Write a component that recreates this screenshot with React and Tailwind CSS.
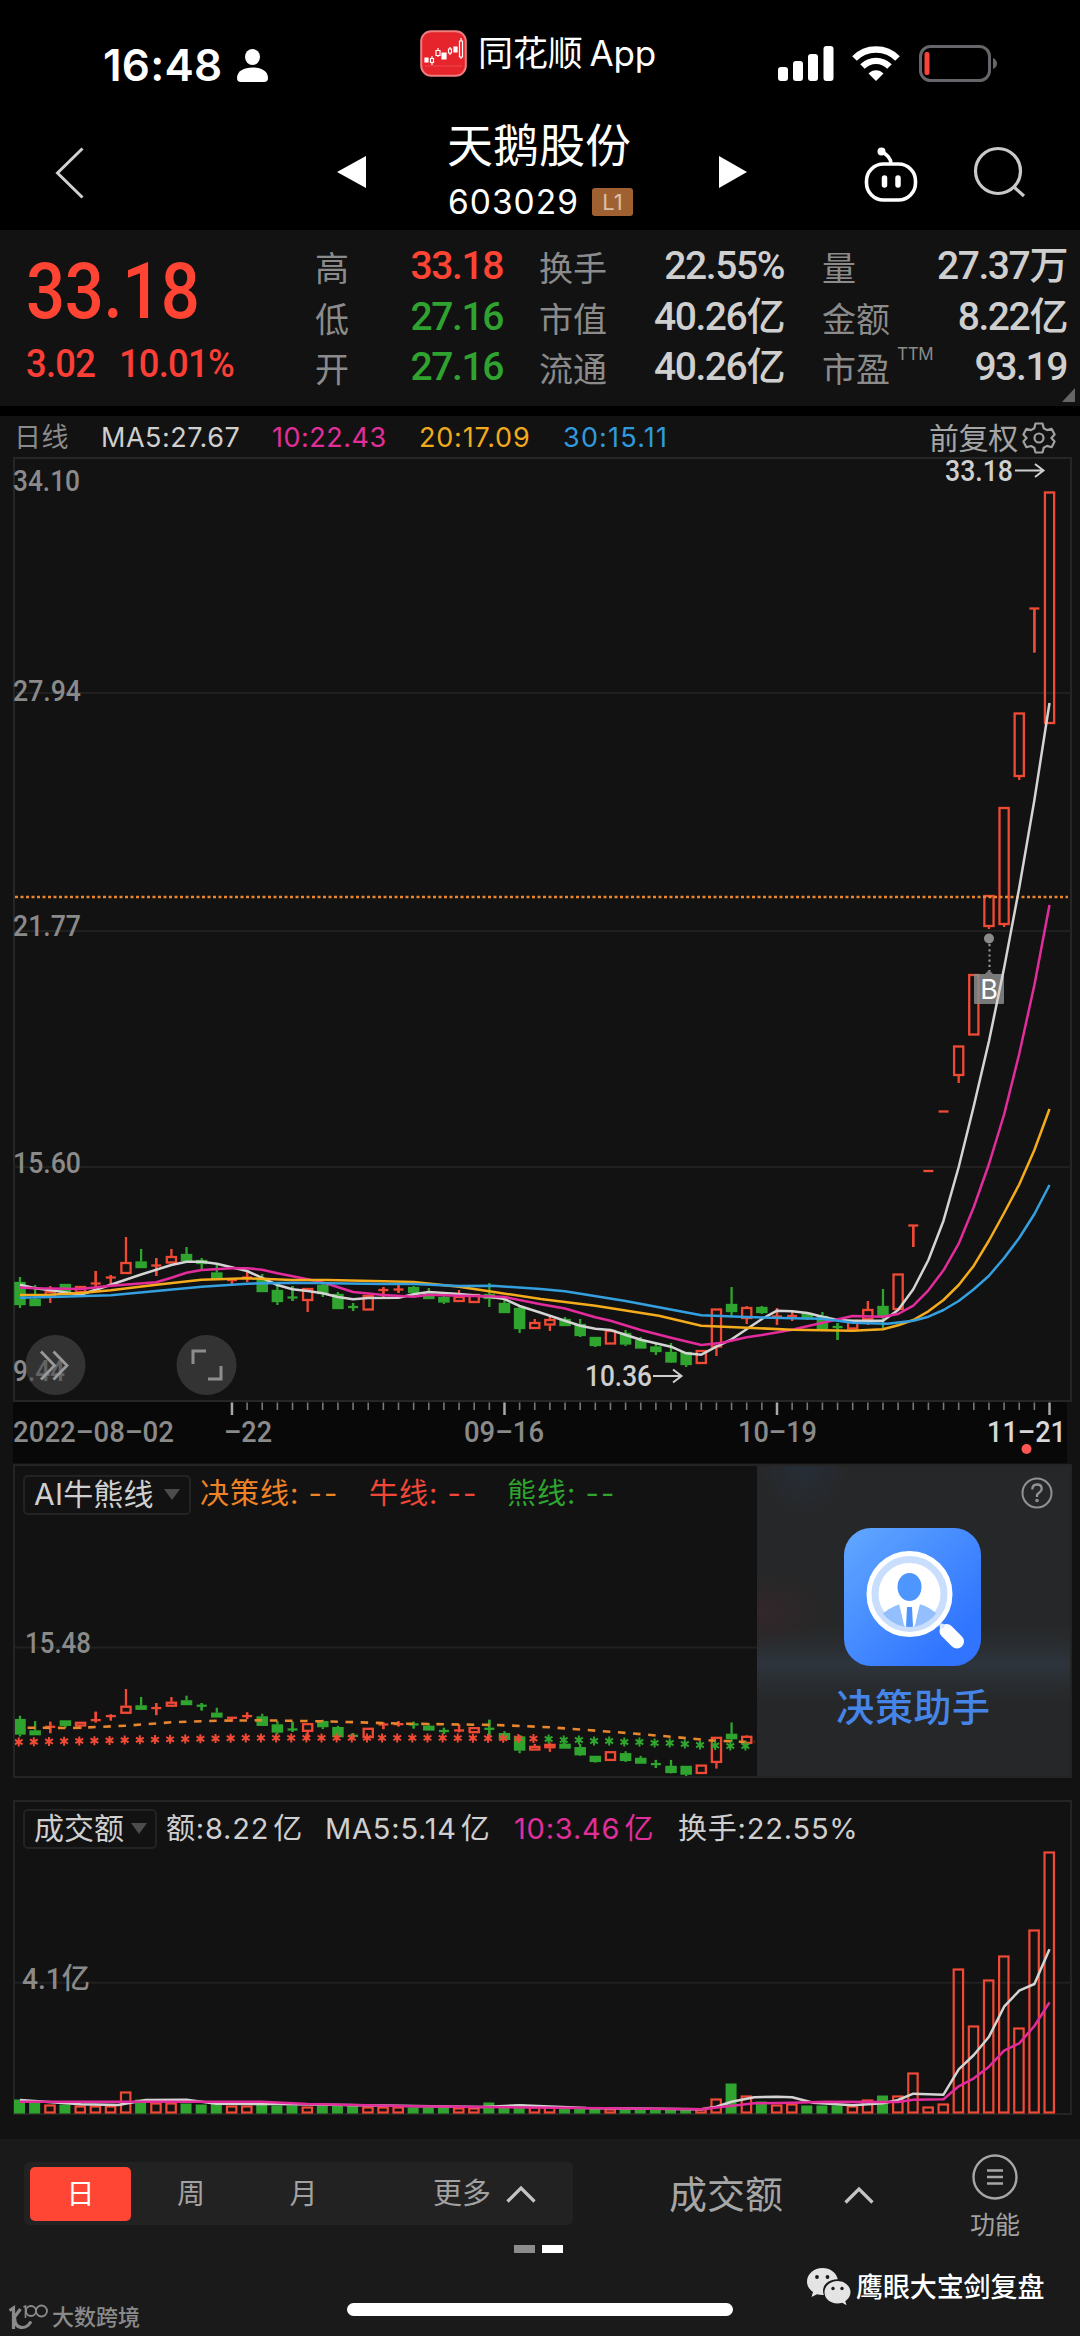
import React from "react";

const RED = "#f04a35";
const GREEN = "#2fa52f";
const STEP = 15.14;

const xAt = (i) => 20 + i * STEP;

// [color, body top, body bottom, wick top, wick bottom]
const CANDLES = [
  ["g", 1282, 1305, 1277, 1308],
  ["g", 1299, 1306, 1285, 1306],
  ["r", 1291, 1296, 1286, 1303],
  ["g", 1284, 1292, 1284, 1295],
  ["r", 1286, 1293, 1286, 1297],
  ["r", 1283, 1284, 1271, 1287],
  ["r", 1277, 1278, 1275, 1284],
  ["r", 1262, 1274, 1237, 1274],
  ["g", 1261.5, 1268, 1249, 1268],
  ["r", 1265, 1266, 1258, 1276],
  ["r", 1256, 1263.5, 1249, 1263],
  ["g", 1254, 1261, 1247, 1261],
  ["g", 1260, 1264, 1258, 1269],
  ["g", 1272.5, 1279.5, 1265, 1279],
  ["r", 1279, 1281, 1279, 1286],
  ["r", 1277, 1278, 1272, 1282],
  ["g", 1278, 1292, 1274, 1292],
  ["g", 1290, 1302, 1285, 1305],
  ["g", 1297, 1298, 1286, 1301],
  ["r", 1288, 1301, 1288, 1312],
  ["g", 1285, 1294, 1283, 1297],
  ["g", 1294, 1309, 1292, 1309],
  ["g", 1306.5, 1307.5, 1303, 1311],
  ["r", 1295, 1310.5, 1295, 1310],
  ["r", 1289.5, 1290.5, 1287, 1297],
  ["r", 1289, 1290, 1285, 1293],
  ["g", 1287, 1293, 1286, 1296],
  ["g", 1292, 1299, 1288, 1299],
  ["g", 1297, 1302.5, 1295, 1304],
  ["r", 1296, 1302, 1290, 1302],
  ["r", 1294, 1303, 1294, 1303],
  ["g", 1294, 1299, 1283, 1307],
  ["g", 1303, 1313, 1300, 1313],
  ["g", 1308, 1329, 1306, 1333],
  ["r", 1322, 1329, 1319, 1329],
  ["r", 1319, 1325.5, 1317, 1331],
  ["g", 1319, 1326, 1317, 1326],
  ["g", 1324, 1336, 1319, 1337],
  ["g", 1337, 1346, 1337, 1347],
  ["r", 1330, 1344.5, 1330, 1344],
  ["g", 1333, 1344.5, 1330, 1346],
  ["g", 1340, 1348.5, 1337, 1348],
  ["g", 1346.5, 1352, 1343, 1355],
  ["g", 1352, 1362.5, 1343, 1363],
  ["g", 1352, 1365, 1352, 1367],
  ["r", 1350, 1364, 1350, 1363],
  ["r", 1308.5, 1347.5, 1309, 1356],
  ["g", 1304, 1312, 1287, 1317],
  ["r", 1307, 1319, 1306, 1324],
  ["g", 1307, 1313, 1306, 1314],
  ["r", 1316, 1317, 1308, 1325],
  ["r", 1315.5, 1316.5, 1311, 1321],
  ["g", 1313, 1319, 1312, 1320],
  ["g", 1316, 1329, 1312, 1330],
  ["g", 1326.5, 1327.5, 1323, 1340],
  ["r", 1320, 1329.5, 1320, 1329],
  ["r", 1309, 1320, 1301, 1325],
  ["g", 1306, 1316, 1289, 1328],
  ["r", 1273.5, 1310, 1274, 1309],
  ["r", 1225, 1226, 1225, 1247],
  ["r", 1170.5, 1171.5, 1170, 1172],
  ["r", 1111, 1112, 1111, 1112],
  ["r", 1045.5, 1076, 1046, 1083],
  ["r", 974, 1035.5, 975, 1035],
  ["r", 895, 927, 896, 929],
  ["r", 807, 925, 808, 927],
  ["r", 712.5, 777, 713, 780],
  ["r", 608, 609, 608, 652.5],
  ["r", 491.5, 724, 492, 724],
];

const MA5 = [[0, 1284.7], [1, 1288.3], [2.3, 1290.7], [4, 1294.7], [6, 1284.7], [8, 1274.5], [10, 1265], [11, 1261.7], [12, 1261.7], [13, 1263.7], [15, 1271], [17, 1285], [18, 1289.3], [19, 1291], [20, 1293.3], [21, 1297], [22, 1299.3], [23, 1298], [25, 1297.7], [26, 1294.3], [27, 1292], [29, 1294], [31, 1296.7], [32, 1299], [33, 1306], [34.4, 1312.7], [36, 1320.7], [37, 1325.7], [38, 1328.7], [39, 1330], [41, 1339.7], [43, 1346.7], [44, 1353.3], [45, 1354.7], [46, 1346.7], [47, 1339.3], [49, 1319], [50, 1310.7], [51, 1311.3], [52, 1313], [53, 1316.7], [54, 1320], [55, 1320.7], [57, 1320.7], [58, 1310], [59, 1289.3], [60, 1260], [61, 1220.7], [62, 1167], [63, 1106], [64, 1041], [65, 968], [66, 888], [67, 800], [68, 703]];
const MA10 = [[0, 1287.5], [1, 1288.3], [4, 1289], [6, 1285.7], [9, 1282.3], [10, 1277.7], [11, 1272.7], [12, 1270], [14, 1268.3], [15, 1268.3], [16, 1269.7], [17, 1273.3], [19, 1279.3], [20.3, 1283.7], [22, 1292], [24, 1295], [26, 1296.7], [27, 1294.7], [29, 1295.7], [31, 1296.3], [32, 1297], [34.4, 1304.3], [36, 1308.5], [38, 1317.3], [39, 1320.7], [41, 1330], [43, 1337.7], [45, 1345], [46.4, 1342.7], [48, 1337.3], [49, 1335], [51, 1329.7], [53, 1322.7], [55, 1316], [57, 1316.7], [58, 1314], [59, 1305.7], [60, 1290.3], [61, 1270.3], [62, 1243.7], [63, 1207], [64, 1164], [65, 1114.5], [66, 1054], [67, 985], [68, 905]];
const MA20 = [[0, 1295], [2, 1294.7], [4, 1293], [6, 1290.3], [9, 1284.7], [12, 1279.7], [15, 1278.3], [18, 1280], [20.3, 1280], [24, 1281.3], [26, 1282], [29, 1286.7], [31, 1291.3], [34.4, 1299], [38, 1305.7], [42.2, 1315.7], [45, 1325.7], [48, 1327.7], [51, 1329.7], [55, 1330.7], [57, 1329.3], [58, 1325.3], [59, 1320], [60, 1311.3], [61, 1300], [62, 1285], [63, 1265.7], [64, 1240.5], [65, 1213], [66, 1184.5], [67, 1150], [68, 1109]];
const MA30 = [[0, 1297.7], [2, 1297], [6, 1295.3], [9, 1291], [12, 1286.7], [15, 1283.7], [18, 1282.7], [24, 1284], [26, 1284], [29, 1286], [31.2, 1285.7], [34.4, 1289], [36, 1291.3], [40, 1301], [45, 1315.3], [48, 1317], [51, 1318.3], [53, 1318.7], [55, 1322.7], [57.3, 1323.7], [59, 1320.7], [60, 1316.7], [61, 1310], [62, 1301], [63, 1289.3], [64, 1275.7], [65, 1258], [66, 1238], [67, 1214], [68, 1185]];

const VOLUMES = [14, 11, 9, 9, 8, 8, 8, 22, 14, 11, 11, 10, 9, 12, 8, 8, 9, 8, 8, 7, 8, 9, 8, 7, 7, 7, 6, 6, 6, 6, 6, 11, 7, 9, 7, 7, 6, 5, 5, 5, 4, 4, 4, 4, 4, 5, 15, 30, 18, 12, 9, 10, 8, 8, 8, 8, 14, 18, 18, 41, 7, 10, 145, 88, 134, 158, 86, 184, 262];
const VOL_COLORS = "ggrgrrrrgrrgggrrgggrgggrrrgggrrgggrrgggrgggggrrgrgrrgggrrgrrrrrrrrrrr";
const VMA5 = [[0, 2100], [4, 2104.3], [6.5, 2105], [8.3, 2100], [11, 2099.7], [13, 2103.7], [17, 2104], [30.5, 2107], [33, 2105.3], [37.4, 2108], [45, 2109.3], [46, 2106.7], [47, 2101.7], [48.5, 2097.3], [50, 2096.7], [51, 2097.3], [52.4, 2102.7], [55, 2105.3], [57, 2103.3], [58, 2100], [59, 2093.7], [61, 2094.7], [62, 2069.3], [63, 2055], [64, 2036.7], [65, 2006.7], [66, 1990.7], [67, 1984], [68, 1949.3]];
const VMA10 = [[0, 2101.7], [16, 2101.7], [19, 2104], [26, 2106.3], [45, 2109.3], [48.5, 2103.3], [51, 2102.7], [53.3, 2101.7], [58, 2102], [59, 2099.7], [61, 2099.3], [62, 2086.3], [63, 2078.3], [64, 2066.7], [65, 2050.7], [66, 2043.3], [67, 2026], [68, 2002.3]];

const DECISION = [[0.5, 1727.7], [3.5, 1728], [7, 1725.7], [10, 1722.3], [13, 1720.7], [16, 1720.3], [20, 1721.3], [25.5, 1723.7], [31.5, 1725], [35, 1727.3], [39.5, 1732.3], [43, 1736.7], [45.5, 1740.3], [47.5, 1741.7], [48.5, 1741.7]];
const BEAR_STARS = [1739, 1740, 1740, 1741, 1741, 1742, 1742, 1743, 1743, 1744, 1745, 1745.5, 1746, 1746];

const toPoints = (line) => line.map(([i, y]) => `${xAt(i).toFixed(1)},${y}`).join(" ");

function Line({ data, color, width = 2.5 }) {
  return <polyline points={toPoints(data)} fill="none" stroke={color} strokeWidth={width} strokeLinejoin="round" />;
}

function Candle({ index, data, mapY = (y) => y, minBody = 3 }) {
  const [kind, ...values] = data;
  const [top, bottom, high, low] = values.map(mapY);
  const x = xAt(index);
  const color = kind === "r" ? RED : GREEN;
  const flat = bottom - top < minBody;
  const mid = (top + bottom) / 2;

  return (
    <g stroke={color} strokeWidth="2.300">
      {high < top && <line x1={x} x2={x} y1={high} y2={top} />}
      {low > bottom && <line x1={x} x2={x} y1={bottom} y2={low} />}
      {flat ? (
        <>
          <line x1={x - 5} x2={x + 5} y1={mid} y2={mid} />
          {low > high + 2 && <line x1={x} x2={x} y1={high} y2={low} />}
        </>
      ) : (
        <rect x={x - 4.6} y={top + 1} width="9.2" height={bottom - top - 2} fill={kind === "r" ? "none" : color} />
      )}
    </g>
  );
}

function Star({ x, y, color }) {
  return (
    <path
      d={`M${x} ${y - 4.5}v9M${x - 3.9} ${y - 2.3}l7.8 4.6M${x + 3.9} ${y - 2.3}l-7.8 4.6`}
      stroke={color}
      strokeWidth="2"
    />
  );
}

function AxisText({ x, y, width, fill = "#8a8a8a", size = 29, children }) {
  return (
    <text x={x} y={y} textLength={width} lengthAdjust="spacingAndGlyphs" fill={fill} fontSize={size} fontWeight="500" fontFamily="Roboto, 'Noto Sans CJK SC', sans-serif">
      {children}
    </text>
  );
}

function StatusBar() {
  return (
    <div className="flex h-[104px] items-start">
      <div className="flex w-[420px] items-center pt-[38px] pl-[103px]">
        <span className="w-[134px] text-[44px] leading-[54px] font-semibold tracking-[0.2px]">16:48</span>
        <svg width="31" height="33" viewBox="0 0 31 33" fill="#fff">
          <ellipse cx="15.5" cy="8" rx="7.5" ry="8" />
          <path d="M0 29C0 22 7 18.5 15.5 18.5S31 22 31 29q0 4-4 4H4q-4 0-4-4z" />
        </svg>
      </div>
      <div className="flex w-[358px] items-center pt-[29px]">
        <svg width="47" height="47" viewBox="0 0 47 47">
          <rect x="1.2" y="1.2" width="44.6" height="44.6" rx="10" fill="#e5252b" stroke="#ef7d80" strokeWidth="2" />
          <path d="M5 36h37" stroke="#f0484c" strokeWidth="1" />
          <g fill="#fff" stroke="#fff" strokeWidth="1.2">
            <path d="M5 28h3v4H5zM22 23h4v6h-4zM34 17h3v5h-3z" />
            <path d="M12 26v9M18 18v9M30 17v8M41 8v21" />
            <path d="M10.500 28.500h3v4h-3zM16 20.500h4v5h-4zM28.500 19h3v4h-3zM39.500 11h3v16h-3z" fill="#e5252b" />
          </g>
        </svg>
        <span className="ml-[11px] text-[35px] leading-[48px] tracking-[-0.1px] whitespace-nowrap [word-spacing:-3px]">同花顺 App</span>
      </div>
      <div className="flex pt-[45px]">
        <svg width="56" height="37" viewBox="0 0 56 37" fill="#fff">
          <rect x="0" y="22" width="10" height="14" rx="3" />
          <rect x="15" y="16" width="10" height="20" rx="3" />
          <rect x="30" y="9" width="10" height="27" rx="3" />
          <rect x="45.500" y="1" width="10" height="35" rx="3" />
        </svg>
        <svg className="ml-[18px]" width="48" height="37" viewBox="0 0 48 37" fill="none" stroke="#fff" strokeWidth="6.400">
          <path d="M2.500 13.500C14 1.500 34 1.500 45.500 13.500" />
          <path d="M10.500 21.500C18 14 30 14 37.500 21.500" />
          <path d="M16.500 28.500C20.500 24 27.500 24 31.500 28.500L24 36z" fill="#fff" stroke="none" />
        </svg>
        <svg className="ml-[19px]" width="80" height="38" viewBox="0 0 80 38">
          <rect x="1.500" y="1.500" width="69" height="34" rx="10" fill="none" stroke="#66666a" strokeWidth="3" />
          <rect x="5.500" y="7" width="5" height="23" rx="2" fill="#f8443a" />
          <path d="M74 13q4 2 4 5.500T74 24z" fill="#66666a" />
        </svg>
      </div>
    </div>
  );
}

function NavBar() {
  return (
    <div className="flex h-[126px]">
      <svg className="mt-[42px] ml-[54px]" width="32" height="54" viewBox="0 0 32 54" fill="none" stroke="#d0d0d0" strokeWidth="3">
        <path d="M28.500 2.500L3.500 27L28.500 51.500" />
      </svg>
      <svg className="mt-[51px] ml-[251px]" width="30" height="34" viewBox="0 0 30 34" fill="#fff">
        <path d="M29 1v32L0 17z" />
      </svg>
      <div className="ml-[80px] w-[190px]">
        <div className="mt-[10px] text-[46px] leading-[62px] whitespace-nowrap">天鹅股份</div>
        <div className="mt-[2px] flex items-center">
          <span className="w-[145px] pl-[1px] text-[33.500px] leading-[48px] tracking-[1px]">603029</span>
          <span className="flex h-[28px] w-[41px] items-center justify-center rounded-[3px] bg-[#a06132] text-[22px] leading-none text-[#dcc0a8]">
            L1
          </span>
        </div>
      </div>
      <svg className="mt-[51px] ml-[81px]" width="30" height="34" viewBox="0 0 30 34" fill="#fff">
        <path d="M1 1v32L29 17z" />
      </svg>
      <svg className="mt-[43px] ml-[115px]" width="56" height="56" viewBox="0 0 56 56" fill="none" stroke="#fff" strokeWidth="3.600">
        <path d="M28 17C28 11 24 8 19 4.500" />
        <circle cx="18.500" cy="4.500" r="2.200" fill="#fff" />
        <rect x="3.500" y="17" width="49" height="36" rx="17" />
        <path d="M21.500 31v7M35 31v7" strokeWidth="5.500" strokeLinecap="round" />
      </svg>
      <svg className="mt-[42px] ml-[54px]" width="54" height="54" viewBox="0 0 54 54" fill="none" stroke="#c9c9c9" strokeWidth="3.200">
        <circle cx="25" cy="25" r="22.500" />
        <path d="M41 41L51 50" />
      </svg>
    </div>
  );
}

function Stat({ label, value, className = "text-[#cfcfcf]", note }) {
  return (
    <div className="flex h-[50.500px] items-center justify-between">
      <span className="relative text-[34px] leading-none text-[#8b8b8b]">
        {label}
        {note && <span className="absolute top-[-7px] left-[75px] text-[17px] leading-none tracking-[-0.3px]">{note}</span>}
      </span>
      <span className={`mt-[-5px] text-[39px] leading-none font-medium tracking-[-1.400px] whitespace-nowrap [font-family:Roboto,'Noto_Sans_CJK_SC',sans-serif] ${className}`}>
        {value}
      </span>
    </div>
  );
}

function QuotePanel() {
  return (
    <div className="relative flex h-[176px] bg-[#121212] pt-[14px]">
      <div className="w-[315px] pl-[26px] font-medium text-[#ff4433] [font-family:Roboto,sans-serif]">
        <div className="mt-[10px] origin-left scale-x-[0.895] text-[77px] leading-[76px] tracking-[-0.5px]">33.18</div>
        <div className="mt-[10px] flex origin-left scale-x-[0.92] text-[39.500px] leading-[48px] tracking-[-0.8px] text-[#fb3f37]">
          <span className="w-[101px]">3.02</span>
          <span>10.01%</span>
        </div>
      </div>
      <div className="w-[188px]">
        <Stat label="高" value="33.18" className="text-[#ff4433]" />
        <Stat label="低" value="27.16" className="text-[#2fa22f]" />
        <Stat label="开" value="27.16" className="text-[#2fa22f]" />
      </div>
      <div className="ml-[36px] w-[245px]">
        <Stat label="换手" value="22.55%" />
        <Stat label="市值" value="40.26亿" />
        <Stat label="流通" value="40.26亿" />
      </div>
      <div className="ml-[38px] w-[245px]">
        <Stat label="量" value="27.37万" />
        <Stat label="金额" value="8.22亿" />
        <Stat label="市盈" value="93.19" note="TTM" />
      </div>
      <svg className="absolute right-[5px] bottom-[4px]" width="13" height="14" viewBox="0 0 13 14">
        <path d="M13 0v14H0z" fill="#666" />
      </svg>
    </div>
  );
}

function MaHeader() {
  return (
    <div className="flex h-[41px] items-center pt-[2px] text-[27px] leading-none tracking-[0.500px] whitespace-nowrap">
      <span className="w-[87px] pl-[14px] text-[#8b8b8b]">日线</span>
      <span className="w-[171px] pl-[14px] text-[#cfcfcf]">MA5:27.67</span>
      <span className="w-[161px] pl-[14px] text-[#e02f9b]">10:22.43</span>
      <span className="w-[144px] tracking-[0.800px] text-[#f0aa1e]">20:17.09</span>
      <span className="w-[366px] tracking-[1.200px] text-[#2f9bdc]">30:15.11</span>
      <span className="text-[30px] tracking-[-0.400px] text-[#a5a5a5]">前复权</span>
      <svg className="ml-[4px]" width="34" height="34" viewBox="0 0 34 34" fill="none" stroke="#a0a0a0" strokeWidth="2.200" strokeLinejoin="round">
        <path d="M13.500 2.500h7l1.200 4.700 3.300 1.900 4.600-1.300 3 5.700-3.200 3.500 3.200 3.500-3 5.700-4.600-1.300-3.300 1.900-1.200 4.700h-7l-1.200-4.700L9 25l-4.600 1.200-3-5.700L4.600 17l-3.200-3.500 3-5.700L9 9.100l3.300-1.900z" />
        <circle cx="17" cy="17" r="4.500" />
      </svg>
    </div>
  );
}

function PriceChart() {
  const ticks = Array.from({ length: 55 }, (_, k) => k + 14);

  return (
    <svg className="block overflow-visible" width="1080" height="1007" viewBox="0 457 1080 1007">
      <rect x="13" y="1402" width="1054" height="61" fill="#080808" />
      <rect x="14" y="458" width="1057" height="943" fill="none" stroke="#262626" strokeWidth="2" />
      <path d="M14 693H1071M14 931H1071M14 1167H1071" stroke="#202020" strokeWidth="2" />

      <AxisText x={13} y={491} width={67}>34.10</AxisText>
      <AxisText x={13} y={701} width={68}>27.94</AxisText>
      <AxisText x={13} y={936} width={68}>21.77</AxisText>
      <AxisText x={13} y={1173} width={68}>15.60</AxisText>
      <AxisText x={13} y={1381} width={52}>9.44</AxisText>

      {CANDLES.map((c, i) => (
        <Candle key={i} index={i} data={c} />
      ))}
      <path d="M15 897H1068" stroke="#e8862e" strokeWidth="2.600" strokeDasharray="3 2.500" />

      {/* buy marker */}
      <circle cx="989" cy="938.500" r="5" fill="#8a8a8a" />
      <path d="M989.500 944v27" stroke="#9a9a9a" strokeWidth="2" strokeDasharray="2.200 3" />
      <path d="M975 974h10l4-4 4 4h10q1 0 1 1v28q0 1-1 1h-28q-1 0-1-1v-28q0-1 1-1z" fill="#8c8c8c" fillOpacity="0.85" />
      <text x="989" y="998.500" textAnchor="middle" fontSize="27" fill="#fff">B</text>

      <Line data={MA5} color="#d4d4d4" />
      <Line data={MA10} color="#e32c9c" />
      <Line data={MA20} color="#f5ac1c" />
      <Line data={MA30} color="#35a0e0" />

      <AxisText x={945} y={480.500} width={68} fill="#cfcfcf">33.18</AxisText>
      <path d="M1015 470.500h28M1035 464l8.500 6.500-8.500 6.500" fill="none" stroke="#cfcfcf" strokeWidth="2" />
      <AxisText x={585} y={1386} width={67} fill="#cfcfcf">10.36</AxisText>
      <path d="M653 1376h28M673 1369.500l8.500 6.500-8.500 6.500" fill="none" stroke="#cfcfcf" strokeWidth="2" />

      <circle cx="55.500" cy="1365" r="30" fill="#4a4a4a" fillOpacity="0.6" />
      <path d="M41 1351.500l13.500 14-13.500 14M53.500 1351.500l13.500 14-13.500 14" fill="none" stroke="#999" strokeWidth="2.800" />
      <circle cx="206.500" cy="1365" r="30" fill="#333" />
      <path d="M193 1364v-13h13M221 1366v13h-13" fill="none" stroke="#8d8d8d" strokeWidth="3" />

      {ticks.map((i) => {
        const major = (i - 14) % 18 === 0;
        return <line key={i} x1={xAt(i)} x2={xAt(i)} y1="1402.500" y2={major ? 1415 : 1410} stroke={major ? "#a8a8a8" : "#777"} strokeWidth={major ? 2.5 : 1.6} />;
      })}
      <AxisText x={13} y={1441.500} width={161}>2022–08–02</AxisText>
      <AxisText x={224} y={1441.500} width={48}>–22</AxisText>
      <AxisText x={464} y={1441.500} width={80}>09–16</AxisText>
      <AxisText x={738} y={1441.500} width={79}>10–19</AxisText>
      <AxisText x={987} y={1441.500} width={79} fill="#d8d8d8">11–21</AxisText>
      <circle cx="1026.500" cy="1449" r="5" fill="#ff5552" />
    </svg>
  );
}

function Dropdown({ children, className }) {
  return (
    <div className={`flex h-[40px] items-center justify-between rounded-[5px] border-2 border-[#232323] text-[30px] leading-none whitespace-nowrap text-[#cfcfcf] ${className}`}>
      <span className="mt-[-3px]">{children}</span>
      <svg className="mt-[-2px]" width="16" height="11" viewBox="0 0 16 11">
        <path d="M0 0h16L8 11z" fill="#4c4c4c" />
      </svg>
    </div>
  );
}

function AiPanel() {
  // same candles on a compressed price scale
  const mapY = (y) => 1689 + (y - 1237) * 0.669;

  return (
    <div className="ml-[13px] flex h-[314px] w-[1059px] border-2 border-[#242424]">
      <div className="w-[742px]">
        <div className="flex h-[58px] items-center whitespace-nowrap">
          <Dropdown className="ml-[8px] w-[168px] pr-[9px] pl-[9px] tracking-[0.200px]">AI牛熊线</Dropdown>
          <div className="mt-[-3px] flex text-[29px] leading-none tracking-[1px]">
            <span className="ml-[9px] w-[169px] text-[#f08326]">决策线: <span className="tracking-[2.200px]">--</span></span>
            <span className="w-[138px] text-[#f04838]">牛线: <span className="tracking-[2.200px]">--</span></span>
            <span className="text-[#2fa52f]">熊线: <span className="tracking-[2.200px]">--</span></span>
          </div>
        </div>
        <svg className="block" width="742" height="252" viewBox="15 1524 742 252">
          <path d="M15 1647.500H757" stroke="#202020" strokeWidth="2" />
          <AxisText x={25} y={1652.500} width={66}>15.48</AxisText>
          {CANDLES.slice(0, 49).map((c, i) => (
            <Candle key={i} index={i} data={c} mapY={mapY} minBody={4.3} />
          ))}
          <polyline points={toPoints(DECISION)} fill="none" stroke="#e8862e" strokeWidth="2.600" strokeDasharray="7.500 7.650" />
          {Array.from({ length: 35 }, (_, i) => (
            <Star key={i} x={xAt(i) - 1.3} y={1742 - Math.min(i, 15) * 0.27 + Math.max(0, i - 28) * 0.1} color={RED} />
          ))}
          {BEAR_STARS.map((y, k) => (
            <Star key={k} x={xAt(k + 35) - 1.3} y={y} color={GREEN} />
          ))}
        </svg>
      </div>
      <div className="relative flex flex-1 flex-col items-center overflow-hidden bg-[#262728] bg-[radial-gradient(ellipse_at_0%_47%,#33272a_0%,transparent_17%),radial-gradient(ellipse_at_15%_0%,#272e38_0%,transparent_12%),linear-gradient(to_bottom,transparent_52%,#2d343b_64%,transparent_76%)]">
        <svg className="mt-[62px] ml-[-1px] block" width="138" height="138" viewBox="0 0 138 138">
          <defs>
            <linearGradient id="assistant" x1="0" y1="0" x2="1" y2="1">
              <stop offset="0" stopColor="#62a8ff" />
              <stop offset="0.8" stopColor="#3176ff" />
              <stop offset="1" stopColor="#3272ff" />
            </linearGradient>
            <clipPath id="lens">
              <circle cx="65.500" cy="66" r="33" />
            </clipPath>
          </defs>
          <rect width="137" height="138" rx="27" fill="url(#assistant)" />
          <circle cx="65.500" cy="66" r="40.500" fill="#c9defc" stroke="#fff" strokeWidth="5" />
          <circle cx="65.500" cy="66" r="31" fill="#fff" />
          <g clipPath="url(#lens)">
            <path d="M36 88Q46 79 56 76l4 22h11l4-22q10 2 20 12l-12 12H48z" fill="#94bfff" />
            <path d="M55 76l6 23h9l6-23z" fill="#fff" />
            <path d="M63 79h5l1 20h-7z" fill="#4d93fb" />
          </g>
          <ellipse cx="65.500" cy="59" rx="12" ry="14" fill="#4d96fd" />
          <path d="M102.500 103L113 113.500" stroke="#fff" strokeWidth="14" strokeLinecap="round" />
          <circle cx="98" cy="98" r="2.500" fill="#dbe9ff" />
        </svg>
        <div className="mt-[16px] text-[38px] leading-[50px] font-medium tracking-[0.600px] text-[#4685e8]">决策助手</div>
        <svg className="absolute top-[11px] right-[17px]" width="32" height="32" viewBox="0 0 32 32" fill="none" stroke="#929292" strokeWidth="2">
          <circle cx="16" cy="16" r="14.500" />
          <path d="M11.300 12.500q0-5 4.700-5t4.700 4.300q0 2.200-2.400 3.700T16 19v1" strokeWidth="2.300" />
          <circle cx="16" cy="23.500" r="0.800" />
        </svg>
      </div>
    </div>
  );
}

function VolumePanel() {
  return (
    <div className="mt-[22px] ml-[13px] h-[315px] w-[1059px] border-2 border-[#242424]">
      <div className="flex h-[54px] items-center whitespace-nowrap">
        <Dropdown className="ml-[8px] w-[134px] pr-[8px] pl-[9px]">成交额</Dropdown>
        <div className="mt-[-2px] flex text-[29px] leading-none tracking-[0.800px] text-[#cfcfcf]">
          <span className="ml-[9px] w-[159px]">额:8.22<span className="ml-[4px]">亿</span></span>
          <span className="w-[189px]">MA5:5.14<span className="ml-[4px]">亿</span></span>
          <span className="w-[164px] text-[#e02f9b]">10:3.46<span className="ml-[4px]">亿</span></span>
          <span>换手:22.55%</span>
        </div>
      </div>
      <svg className="block overflow-visible" width="1055" height="259" viewBox="15 1856 1055 259">
        <path d="M15 1982.700H1070" stroke="#202020" strokeWidth="2" />
        <AxisText x={22} y={1989} width={68}>4.1亿</AxisText>
        {VOLUMES.map((h, i) =>
          VOL_COLORS[i] === "g" ? (
            <rect key={i} x={xAt(i) - 6} y={2113.5 - h} width="11" height={h} fill={GREEN} />
          ) : (
            <rect key={i} x={xAt(i) - 5} y={2114.5 - h} width="9.400" height={Math.max(h - 2, 1)} fill="none" stroke={RED} strokeWidth="2.200" />
          )
        )}
        <Line data={VMA5} color="#d4d4d4" />
        <Line data={VMA10} color="#e32c9c" />
      </svg>
    </div>
  );
}

function ChevronUp({ className }) {
  return (
    <svg className={className} width="30" height="18" viewBox="0 0 30 18" fill="none" stroke="#c4c4c4" strokeWidth="3.200">
      <path d="M1.500 16.500L15 3l13.500 13.500" />
    </svg>
  );
}

function WechatIcon() {
  return (
    <svg width="44" height="38" viewBox="0 0 44 38" fill="#e4e4e4">
      <path d="M15.500 0C7 0 0 6 0 13.500c0 4.300 2.300 8 6 10.500l-1.500 5 5.500-2.800c2 .5 3.500.8 5.500.8h1.300C13.500 18 21 11 30.800 11.300 29.500 4.800 23 0 15.500 0z" />
      <path d="M43.500 24.300C43.500 17.800 37.500 13 30.500 13S17.500 18 17.500 24.300 23 35.500 30.500 35.500c1.600 0 3.200-.3 4.700-.8l4.300 2.500-1.200-4c3.200-2.200 5.200-5.300 5.200-8.900z" />
      <g fill="#1a1a1a">
        <circle cx="10" cy="9" r="1.900" />
        <circle cx="20.500" cy="9" r="1.900" />
        <circle cx="26" cy="20.500" r="1.700" />
        <circle cx="35" cy="20.500" r="1.700" />
      </g>
    </svg>
  );
}

function BottomBar() {
  return (
    <div className="mt-[24px] h-[197px] bg-[#1a1a1a]">
      <div className="flex h-[106px]">
        <div className="mt-[23px] ml-[24px] flex h-[63px] w-[549px] items-center rounded-[5px] bg-[#222] text-[28px] text-[#a2a2a2]">
          <span className="ml-[6px] flex h-[54px] w-[101px] items-center justify-center rounded-[5px] bg-[#ff4534] text-white">日</span>
          <span className="w-[120px] text-center">周</span>
          <span className="w-[105px] text-center">月</span>
          <span className="ml-[77px] text-[29px]">更多</span>
          <ChevronUp className="ml-[15px]" />
        </div>
        <div className="mt-[24px] ml-[96px] flex h-[63px] items-center text-[38px] text-[#a6a6a6]">
          成交额
          <ChevronUp className="ml-[61px]" />
        </div>
        <div className="mt-[15px] ml-[96px] flex flex-col items-center text-[25px] leading-[32px] text-[#a2a2a2]">
          <svg width="46" height="46" viewBox="0 0 46 46" fill="none" stroke="#a6a6a6" strokeWidth="2.400">
            <circle cx="23" cy="23" r="21.500" />
            <path d="M15 16.500h16M15 23h16M15 29.500h16" />
          </svg>
          <span className="mt-[9px]">功能</span>
        </div>
      </div>
      <div className="flex h-[8px] gap-[7px] pl-[514px]">
        <div className="w-[21px] bg-[#8c8c8c]" />
        <div className="w-[21px] bg-white" />
      </div>
      <div className="flex h-[83px]">
        <div className="mt-[49px] flex h-[30px] w-[347px] items-center pl-[9px] text-[#8a8a8a]">
          <svg width="40" height="26" viewBox="0 0 40 26" fill="none" stroke="#8a8a8a">
            <path d="M0.500 6.500L4.500 4v21M11.500 5L5.500 13q0 10.500 8 10.500 5 0 8.500-6" strokeWidth="3.200" />
            <path d="M14.500 3l2-1v12" strokeWidth="1.600" />
            <circle cx="22" cy="7" r="5" strokeWidth="1.800" />
            <circle cx="32.500" cy="7" r="5.500" strokeWidth="1.800" />
          </svg>
          <span className="ml-[3px] text-[22px] leading-none font-medium">大数跨境</span>
        </div>
        <div className="mt-[50px] h-[13px] w-[386px] rounded-full bg-white" />
        <div className="mt-[13px] ml-[74px] flex h-[42px] items-center">
          <WechatIcon />
          <span className="ml-[5px] text-[27px] leading-none font-medium tracking-[-0.100px] whitespace-nowrap">鹰眼大宝剑复盘</span>
        </div>
      </div>
    </div>
  );
}

export default function App() {
  return (
    <div className="h-[2336px] w-[1080px] overflow-hidden bg-[#121212] text-white [font-family:Inter,'Noto_Sans_CJK_SC',sans-serif]">
      <div className="bg-black">
        <StatusBar />
        <NavBar />
      </div>
      <QuotePanel />
      <div className="h-[10px] bg-black" />
      <MaHeader />
      <PriceChart />
      <AiPanel />
      <VolumePanel />
      <BottomBar />
    </div>
  );
}
